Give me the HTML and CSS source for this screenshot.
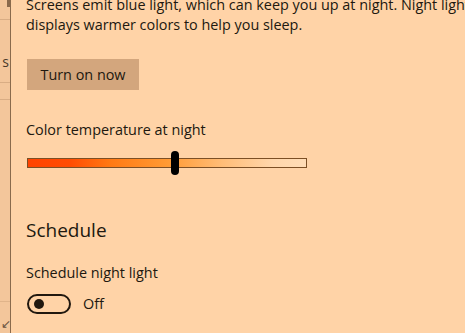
FILE: index.html
```html
<!DOCTYPE html>
<html>
<head>
<meta charset="utf-8">
<link rel="stylesheet" href="styles.css">
</head>
<body>
<div class="app">
  <nav class="side">
    <div class="side-top"></div>
    <div class="side-row r1"></div>
    <div class="side-row r2"><span class="side-s">s</span></div>
    <div class="side-row r3"></div>
    <div class="side-fill"></div>
    <div class="side-row r4"><span class="side-glyph">↙</span></div>
  </nav>
  <main class="main">
    <p class="desc">Screens emit blue light, which can keep you up at night. Night light<br>displays warmer colors to help you sleep.</p>
    <button class="btn">Turn on now</button>
    <div class="label">Color temperature at night</div>
    <div class="slider">
      <div class="track"></div>
      <div class="thumb"></div>
    </div>
    <h2 class="heading">Schedule</h2>
    <div class="label2">Schedule night light</div>
    <div class="toggle-row">
      <div class="toggle"><span class="knob"></span></div>
      <span class="toggle-text">Off</span>
    </div>
  </main>
</div>
</body>
</html>
```
FILE: styles.css
```css
html, body {
  margin: 0;
  padding: 0;
  background: #ffd3a7;
  overflow: hidden;
}
.app {
  display: flex;
  width: 465px;
  height: 333px;
  font-family: "Open Sans", "Noto Sans", sans-serif;
  color: #21180f;
}
.side {
  width: 10px;
  flex: none;
  background: #f3c69b;
  border-right: 1px solid #8a6a4c;
  display: flex;
  flex-direction: column;
  position: relative;
}
.side-top {
  position: absolute;
  right: 0;
  top: 0;
  width: 3px;
  height: 7px;
  background: #8a6a4c;
}
.side-row {
  border-bottom: 1px solid #d9ad84;
  position: relative;
}
.r1 { height: 19px; }
.r2 { height: 62px; }
.r3 { height: 16px; }
.side-fill { height: 201px; border-bottom: 1px solid #e0b48a; }
.r4 { border-bottom: none; height: 30px; }
.side-s {
  position: absolute;
  right: 1px;
  top: 34px;
  font-size: 14px;
  line-height: 16px;
  color: #4a3a2a;
}
.side-glyph {
  position: absolute;
  left: 1px;
  top: 16px;
  font-size: 12px;
  line-height: 12px;
  color: #6a5440;
}
.main {
  flex: 1;
  padding-left: 15px;
  overflow: hidden;
  display: flex;
  flex-direction: column;
  align-items: flex-start;
}
.desc {
  margin: -5px 0 0 0;
  font-size: 14.4px;
  line-height: 20px;
  white-space: nowrap;
}
.btn {
  margin-top: 24px;
  width: 112px;
  height: 31px;
  border: none;
  background: #d3a67d;
  font-family: inherit;
  font-size: 14.4px;
  color: #21180f;
  padding: 0;
  margin-left: 1px;
}
.label {
  margin-top: 30px;
  font-size: 14.4px;
  line-height: 20px;
}
.slider {
  margin-top: 11px;
  position: relative;
  width: 280px;
  height: 24px;
  margin-left: 1px;
  display: flex;
  align-items: center;
}
.track {
  width: 278px;
  height: 8px;
  border: 1px solid #7c4f25;
  background: linear-gradient(to right, #ff4300 0%, #ff4c02 15%, #ff7a14 30%, #ff9a34 50%, #ffbd78 70%, #ffd6ab 88%, #ffdcb6 100%);
}
.thumb {
  position: absolute;
  left: 144px;
  top: 0;
  width: 8px;
  height: 24px;
  border-radius: 4px;
  background: #000;
}
.heading {
  margin: 41px 0 0 0;
  font-size: 19px;
  line-height: 28px;
  font-weight: 400;
}
.label2 {
  margin-top: 19px;
  font-size: 14.4px;
  line-height: 20px;
}
.toggle-row {
  margin-top: 11px;
  display: flex;
  align-items: center;
  gap: 12px;
  margin-left: 1px;
}
.toggle {
  height: 16px;
  border: 2px solid #21180f;
  border-radius: 10px;
  display: flex;
  align-items: center;
  padding-left: 5px;
  box-sizing: content-box;
  width: 35px;
}
.knob {
  width: 10px;
  height: 10px;
  border-radius: 50%;
  background: #21180f;
}
.toggle-text {
  font-size: 14.4px;
  line-height: 20px;
}
```
